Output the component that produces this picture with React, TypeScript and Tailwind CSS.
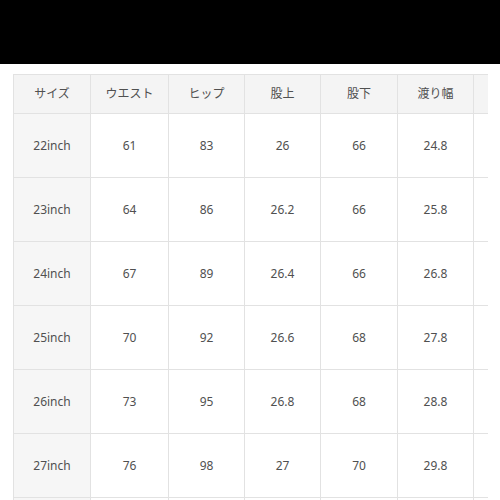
const headers = ["サイズ", "ウエスト", "ヒップ", "股上", "股下", "渡り幅", ""];

const rows = [
  ["22inch", "61", "83", "26", "66", "24.8", ""],
  ["23inch", "64", "86", "26.2", "66", "25.8", ""],
  ["24inch", "67", "89", "26.4", "66", "26.8", ""],
  ["25inch", "70", "92", "26.6", "68", "27.8", ""],
  ["26inch", "73", "95", "26.8", "68", "28.8", ""],
  ["27inch", "76", "98", "27", "70", "29.8", ""],
  ["", "", "", "", "", "", ""],
];

const widths = [77, 78, 76, 76, 77, 76, 80];

export default function App() {
  return (
    <div
      className="w-[500px] h-[500px] overflow-hidden bg-white"
      style={{ fontFamily: '"Noto Sans", "Noto Sans CJK JP", sans-serif' }}
    >
      <div className="h-[64px] bg-black" />
      <div className="pl-[13px] pt-[10px]">
        <div className="w-[475px] overflow-hidden">
          <table className="table-fixed border-collapse w-[540px] text-[12px] text-[#505050]">
            <colgroup>
              {widths.map((w, i) => (
                <col key={i} style={{ width: w }} />
              ))}
            </colgroup>
            <thead>
              <tr className="h-[39px] bg-[#f4f4f4]">
                {headers.map((h, i) => (
                  <th
                    key={i}
                    className="border border-[#e2e2e2] font-normal text-center align-middle"
                  >
                    {h}
                  </th>
                ))}
              </tr>
            </thead>
            <tbody>
              {rows.map((r, ri) => (
                <tr key={ri} className="h-[64px]">
                  {r.map((c, ci) => (
                    <td
                      key={ci}
                      className={
                        "border border-[#e2e2e2] text-center align-middle " +
                        (ci === 0 ? "bg-[#f6f6f6]" : "bg-white")
                      }
                    >
                      {c}
                    </td>
                  ))}
                </tr>
              ))}
            </tbody>
          </table>
        </div>
      </div>
    </div>
  );
}
